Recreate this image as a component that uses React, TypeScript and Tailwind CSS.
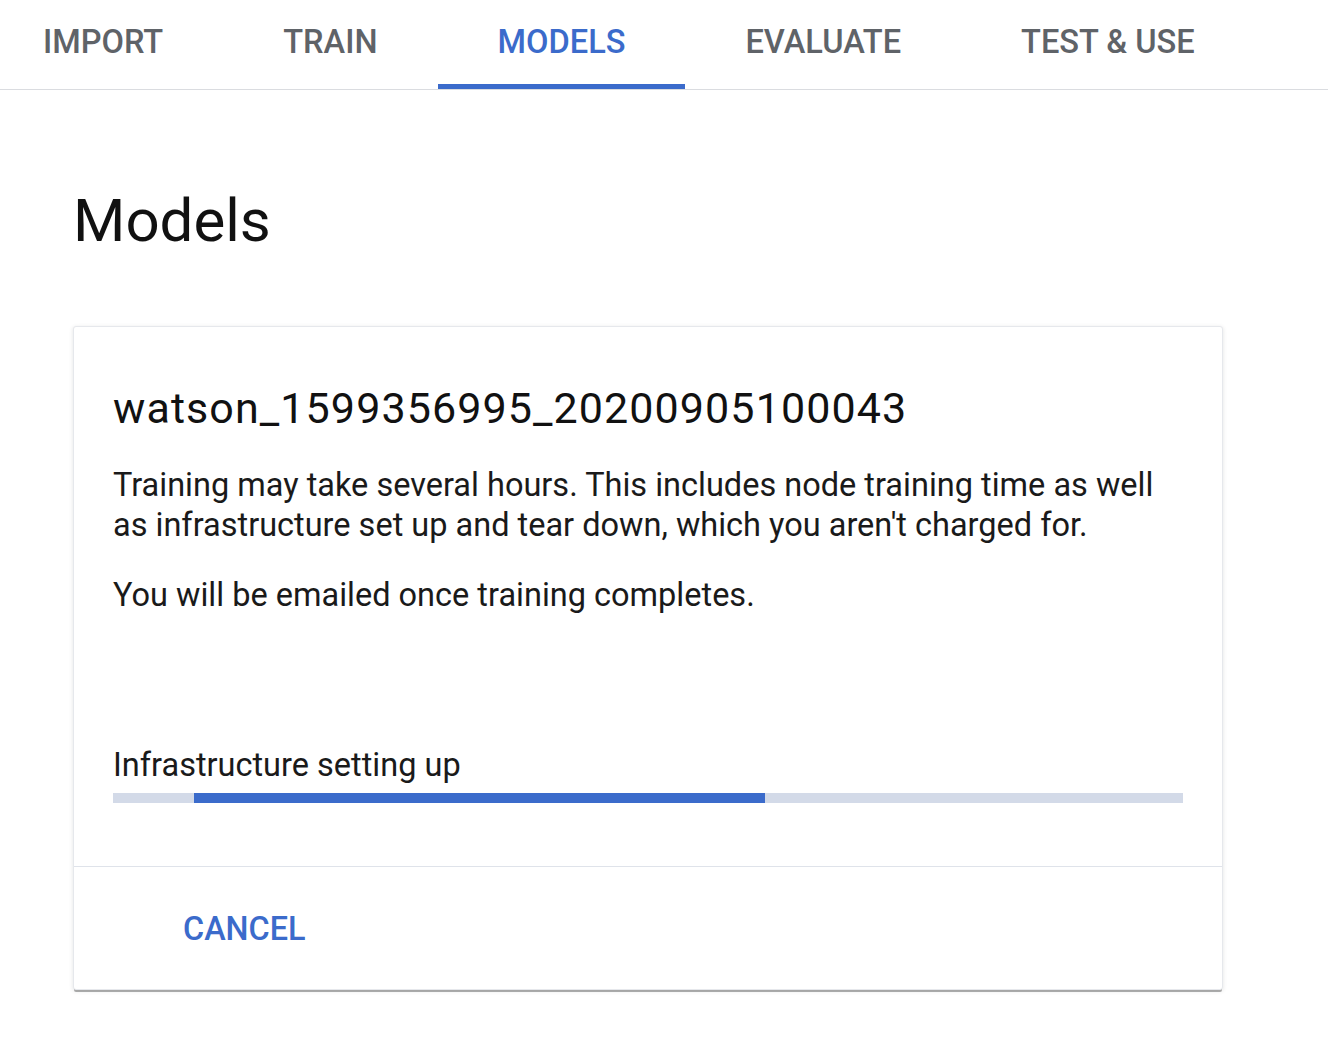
import React from 'react';

const tabs = ['IMPORT', 'TRAIN', 'MODELS', 'EVALUATE', 'TEST & USE'];

const TabBar = ({ active }: { active: string }) => (
  <div className="flex h-[90px] border-b border-[#dadce0]">
    <div className="flex -ml-[17px]">
      {tabs.map((t) => (
        <div
          key={t}
          className={`flex items-center px-[60px] border-b-[5px] text-[32.6px] font-medium leading-none ${
            t === active ? 'border-[#3b6bcb] text-[#3b6bcb]' : 'border-transparent text-[#5f6368]'
          }`}
        >
          {t}
        </div>
      ))}
    </div>
  </div>
);

const ProgressBar = ({ start, end }: { start: number; end: number }) => (
  <div className="flex h-[10px] bg-[#d3dae8]">
    <div style={{ width: `${start}%` }} />
    <div className="bg-[#3b6bcb]" style={{ width: `${end - start}%` }} />
  </div>
);

export default function App() {
  return (
    <div className="min-h-screen bg-white text-[#202124]" style={{ fontFamily: 'Roboto, "Noto Sans", sans-serif' }}>
      <TabBar active="MODELS" />
      <div className="px-[73px]">
        <h1 className="mt-[97px] text-[60px] leading-[68px] font-normal text-[#111]">Models</h1>
        <div className="mt-[71px] w-[1150px] rounded-[3px] bg-white border border-[#e6e8ec] shadow-[0_3px_0_-1px_rgba(0,0,0,0.3),0_1px_4px_rgba(60,64,67,0.15)]">
          <div className="pl-[39px] pr-[40px] pt-[55px] pb-[63px]">
            <h2 className="text-[43px] leading-[52px] tracking-[1.1px] font-normal text-[#111]">watson_1599356995_20200905100043</h2>
            <p className="mt-[31px] max-w-[1060px] text-[32.5px] leading-[40px] text-[#1a1a1a]">
              Training may take several hours. This includes node training time as well as infrastructure set up and
              tear down, which you aren't charged for.
            </p>
            <p className="mt-[30px] text-[32.5px] leading-[40px] text-[#1a1a1a]">You will be emailed once training completes.</p>
            <p className="mt-[130px] text-[32.5px] leading-[40px] text-[#1a1a1a]">Infrastructure setting up</p>
            <div className="mt-[8px] w-[1070px]">
              <ProgressBar start={7.6} end={60.9} />
            </div>
          </div>
          <div className="border-t border-[#dfe3ea] pt-[42px] pb-[40px] pl-[109px]">
            <button className="text-[32.4px] leading-[40px] font-medium text-[#3b6bcb]">CANCEL</button>
          </div>
        </div>
      </div>
    </div>
  );
}
